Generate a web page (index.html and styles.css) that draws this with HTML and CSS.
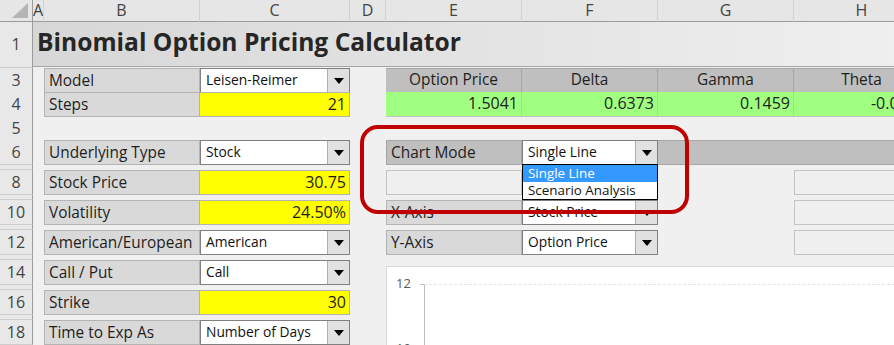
FILE: index.html
```html
<!DOCTYPE html>
<html lang="en">
<head>
  <meta charset="UTF-8" />
  <title>Binomial Option Pricing Calculator</title>
  <link rel="stylesheet" href="styles.css">
</head>
<body>
  <div class="sheet">
    <div class="row row-colhead">
      <div class="corner">
        <svg width="18" height="16" viewBox="0 0 18 16"><polygon points="17,0 17,15 1,15" fill="#b4b4b4"/></svg>
      </div>
      <div class="ch">A</div>
      <div class="ch">B</div>
      <div class="ch">C</div>
      <div class="ch">D</div>
      <div class="ch">E</div>
      <div class="ch">F</div>
      <div class="ch">G</div>
      <div class="ch">H</div>
    </div>

    <div class="row row-title">
      <div class="rh">1</div>
      <div class="title">Binomial Option Pricing Calculator</div>
    </div>
    <div class="row row-gap6"><div class="rh"></div></div>

    <div class="row row-24">
      <div class="rh">3</div><div></div>
      <div class="lbl">Model</div>
      <div class="dd"><span>Leisen-Reimer</span><div class="dd-btn"><i></i></div></div>
      <div></div>
      <div class="gh">Option Price</div>
      <div class="gh">Delta</div>
      <div class="gh">Gamma</div>
      <div class="gh">Theta</div>
    </div>
    <div class="row row-24">
      <div class="rh">4</div><div></div>
      <div class="lbl">Steps</div>
      <div class="val">21</div>
      <div></div>
      <div class="gv">1.5041</div>
      <div class="gv">0.6373</div>
      <div class="gv">0.1459</div>
      <div class="gv">-0.0125</div>
    </div>
    <div class="row row-24"><div class="rh">5</div></div>

    <div class="row">
      <div class="rh">6</div><div></div>
      <div class="lbl">Underlying Type</div>
      <div class="dd"><span>Stock</span><div class="dd-btn"><i></i></div></div>
      <div></div>
      <div class="lbl lbl-dark">Chart Mode</div>
      <div class="dd"><span>Single Line</span><div class="dd-btn"><i></i></div></div>
      <div class="band"></div>
    </div>
    <div class="row row-gap"><div class="rh"></div></div>

    <div class="row">
      <div class="rh">8</div><div></div>
      <div class="lbl">Stock Price</div>
      <div class="val">30.75</div>
      <div></div>
      <div class="box"></div>
      <div></div><div></div>
      <div class="box"></div>
    </div>
    <div class="row row-gap"><div class="rh"></div></div>

    <div class="row">
      <div class="rh">10</div><div></div>
      <div class="lbl">Volatility</div>
      <div class="val">24.50%</div>
      <div></div>
      <div class="lbl">X-Axis</div>
      <div class="dd"><span>Stock Price</span><div class="dd-btn"><i></i></div></div>
      <div></div>
      <div class="box"></div>
    </div>
    <div class="row row-gap"><div class="rh"></div></div>

    <div class="row">
      <div class="rh">12</div><div></div>
      <div class="lbl">American/European</div>
      <div class="dd"><span>American</span><div class="dd-btn"><i></i></div></div>
      <div></div>
      <div class="lbl">Y-Axis</div>
      <div class="dd"><span>Option Price</span><div class="dd-btn"><i></i></div></div>
      <div></div>
      <div class="box"></div>
    </div>
    <div class="row row-gap"><div class="rh"></div></div>

    <div class="row">
      <div class="rh">14</div><div></div>
      <div class="lbl">Call / Put</div>
      <div class="dd"><span>Call</span><div class="dd-btn"><i></i></div></div>
    </div>
    <div class="row row-gap"><div class="rh"></div></div>

    <div class="row">
      <div class="rh">16</div><div></div>
      <div class="lbl">Strike</div>
      <div class="val">30</div>
    </div>
    <div class="row row-gap"><div class="rh"></div></div>

    <div class="row">
      <div class="rh">18</div><div></div>
      <div class="lbl">Time to Exp As</div>
      <div class="dd"><span>Number of Days</span><div class="dd-btn"><i></i></div></div>
    </div>

    <!-- floating objects -->
    <div class="chart">
      <div class="tick-label t12">12</div>
      <div class="tick-label t10">10</div>
      <div class="plot"></div>
    </div>

    <div class="dd-list">
      <div class="dd-item active">Single Line</div>
      <div class="dd-item">Scenario Analysis</div>
    </div>

    <div class="callout"></div>
  </div>
</body>
</html>
```

FILE: styles.css
```css
* { margin: 0; padding: 0; box-sizing: border-box; }
body {
  font-family: "Open Sans", "Noto Sans", sans-serif;
  background: #f0f0f0;
  color: #1e1e1e;
  overflow: hidden;
}
.sheet {
  position: relative;
  width: 894px;
  height: 345px;
  overflow: hidden;
}
.row {
  display: grid;
  grid-template-columns: 33px 11px 156px 150px 36px 136px 136px 136px 136px;
  height: 25px;
  font-size: 15.4px;
}
.row-colhead { height: 22px; }
.row-title { height: 40px; }
.row-gap6 { height: 6px; }
.row-24 { height: 24px; }
.row-gap { height: 5px; }

/* headers */
.corner {
  background: #e6e6e6;
  border-right: 1px solid #9b9b9b;
  border-bottom: 1px solid #9b9b9b;
  display: flex;
  justify-content: flex-end;
  align-items: flex-end;
  padding: 0 3px 2px 0;
}
.ch {
  background: #e6e6e6;
  border-right: 1px solid #d2d2d2;
  border-bottom: 1px solid #9b9b9b;
  color: #444;
  font-size: 16px;
  text-align: center;
  line-height: 21px;
  overflow: hidden;
}
.rh {
  background: #e8e8e8;
  border-right: 1px solid #9b9b9b;
  border-bottom: 1px solid #cdcdcd;
  color: #444;
  font-size: 16px;
  text-align: center;
  line-height: 24px;
  grid-column: 1;
}
.row-title .rh { line-height: 44px; }

.title {
  grid-column: 2 / -1;
  background: linear-gradient(to right, #d7d7d7, #f0f0f0);
  border-bottom: 1px solid #a6a6a6;
  font-weight: 700;
  font-size: 24.6px;
  color: #262626;
  padding-left: 4px;
  line-height: 40px;
  white-space: nowrap;
}

/* cells */
.lbl {
  background: #d9d9d9;
  border: 1px solid #b4b4b4;
  padding-left: 4px;
  line-height: 23px;
  white-space: nowrap;
  overflow: hidden;
}
.lbl-dark { background: #bfbfbf; border-color: #a6a6a6; }
.band {
  grid-column: span 2;
  background: #bfbfbf;
  border-top: 1px solid #a6a6a6;
  border-bottom: 1px solid #a6a6a6;
}
.val {
  background: #ffff00;
  border: 1px solid #b4b4b4;
  border-left: none;
  text-align: right;
  padding-right: 3px;
  line-height: 23px;
  font-size: 16px;
}
.gh {
  background: #bfbfbf;
  border: 1px solid #a6a6a6;
  border-left: none;
  text-align: center;
  line-height: 22px;
}
.gh:first-of-type { border-left: 1px solid #a6a6a6; }
.gv {
  background: #a0ff80;
  border: 1px solid #c3c3c3;
  border-top: none;
  border-left: none;
  text-align: right;
  padding-right: 3px;
  line-height: 22px;
  font-size: 16px;
}
.box { border: 1px solid #c3c3c3; }

/* dropdowns */
.dd {
  display: flex;
  background: #fff;
  border: 1px solid #808080;
  font-size: 13.8px;
  color: #111;
  line-height: 22px;
}
.dd span { flex: 1; padding-left: 5px; white-space: nowrap; overflow: hidden; }
.dd-btn {
  width: 22px;
  background: #e1e1e1;
  border-left: 1px solid #adadad;
  display: flex;
  align-items: center;
  justify-content: center;
}
.dd-btn i {
  border-left: 5px solid transparent;
  border-right: 5px solid transparent;
  border-top: 6px solid #000;
}

.dd-list {
  position: absolute;
  left: 522px;
  top: 164px;
  width: 136px;
  background: #fff;
  border: 1px solid #000;
  font-size: 13.4px;
}
.dd-item {
  height: 17px;
  line-height: 17px;
  padding-left: 5px;
  color: #111;
  overflow: hidden;
  white-space: nowrap;
}
.dd-item.active { background: #3399ff; color: #fff; }

.callout {
  position: absolute;
  left: 360px;
  top: 125px;
  width: 329px;
  height: 89px;
  border: 4px solid #c00000;
  border-radius: 18px;
}

/* chart object */
.chart {
  position: absolute;
  left: 386px;
  top: 266px;
  width: 540px;
  height: 140px;
  background: #fff;
  border: 1px solid #d9d9d9;
}
.tick-label {
  position: absolute;
  left: 9px;
  font-size: 13px;
  color: #595959;
}
.t12 { top: 7px; }
.t10 { top: 72px; }
.plot {
  position: absolute;
  left: 37px;
  top: 17px;
  right: 0;
  bottom: 0;
  border-left: 1px solid #bfbfbf;
  border-top: 1px dashed #e4e4e4;
}
.plot::before {
  content: "";
  position: absolute;
  left: -5px;
  top: -1px;
  width: 4px;
  border-top: 1px solid #bfbfbf;
}
```
